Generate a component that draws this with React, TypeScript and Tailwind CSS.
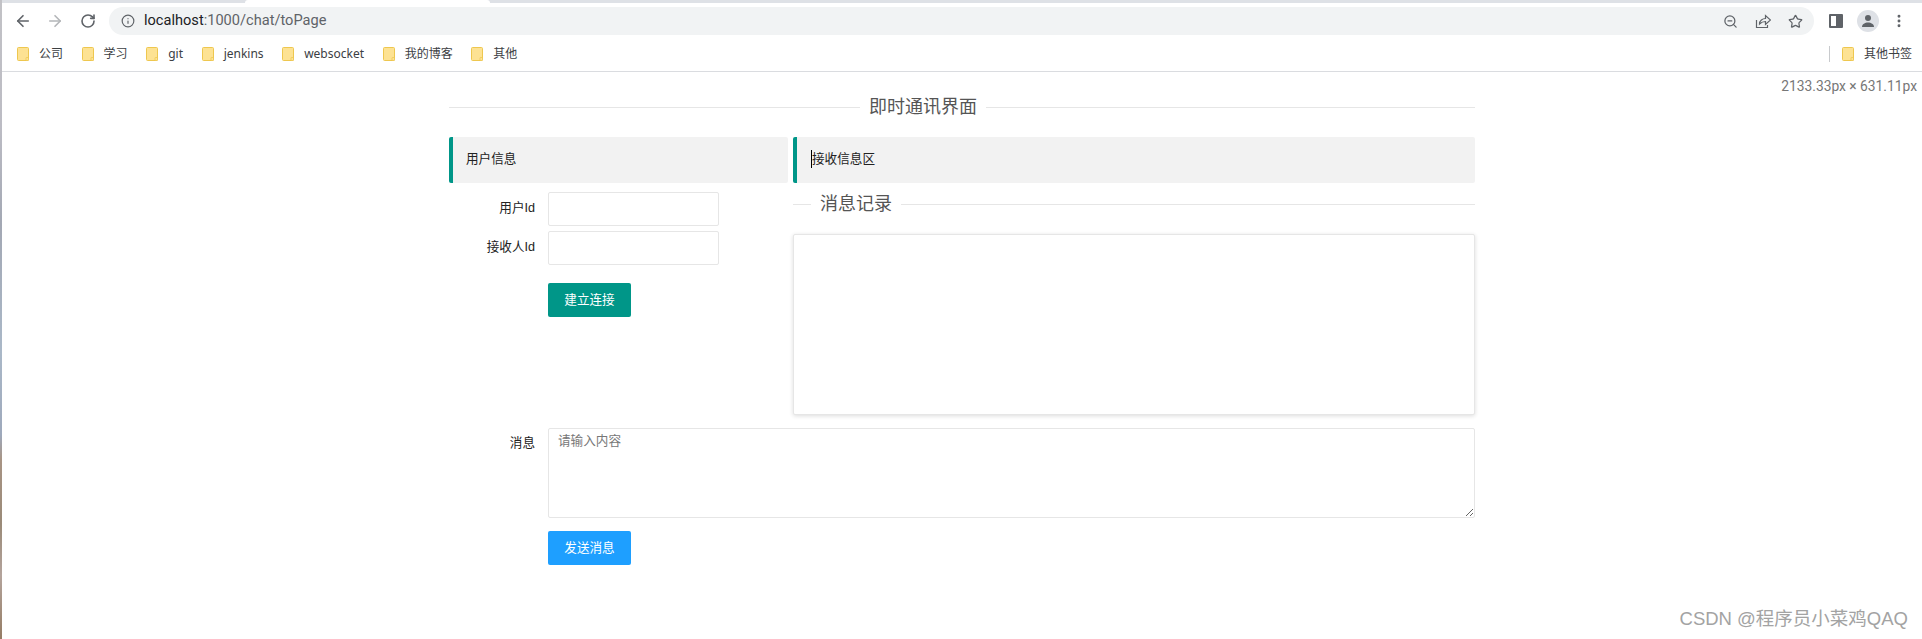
import { ArrowLeft, ArrowRight, Info, MoreVertical, RotateCw, Star, ZoomOut } from "lucide-react";

const bookmarks = ["公司", "学习", "git", "jenkins", "websocket", "我的博客", "其他"];

function FolderIcon() {
  return (
    <svg width="12" height="14" viewBox="0 0 12 14" className="shrink-0">
      <rect x="0.5" y="0.5" width="11" height="13" rx="1" fill="#fde293" stroke="#eec74f" />
      <rect x="9" y="10.5" width="2.5" height="3" rx="0.5" fill="#fde293" stroke="#eec74f" strokeWidth="0.7" />
    </svg>
  );
}

function SectionTitle({ title, lead }: { title: string; lead?: boolean }) {
  return (
    <div className="flex h-6 items-center">
      <div className={lead ? "h-px w-[18px] bg-[#e6e6e6]" : "h-px flex-1 bg-[#e6e6e6]"} />
      <span className="px-[9px] text-[18px] leading-6 text-[#555]">{title}</span>
      <div className={lead ? "h-px flex-1 bg-[#e6e6e6]" : "h-px w-[489px] bg-[#e6e6e6]"} />
    </div>
  );
}

function FormRow({ label }: { label: string }) {
  return (
    <div className="flex items-center">
      <label className="w-[86px] pb-[1px] text-right text-[12.6px] text-[#222]">{label}</label>
      <input className="ml-[13px] h-[34px] w-[171px] rounded-[2px] border border-[#e6e6e6] bg-white outline-none" />
    </div>
  );
}

export default function App() {
  return (
    <div className="flex h-[639px] w-full overflow-hidden bg-white font-['Liberation_Sans','Noto_Sans_CJK_SC',sans-serif]">
      <div className="w-[2px] shrink-0 bg-[linear-gradient(180deg,#c2c2c6_0%,#bcbcc4_20%,#a3a8b4_35%,#aab8c8_55%,#9ea9bc_68%,#a89484_72%,#9a8a78_82%,#b4a49c_90%,#947c64_100%)]" />
      <div className="relative min-w-0 flex-1">
        {/* browser chrome */}
        <div className="flex h-[3px] bg-[#dee1e6]">
          <div className="ml-[243px] h-[3px] w-[245px] rounded-t-lg bg-white" />
        </div>
        <div className="flex h-9 items-center text-[#5f6368]">
          <ArrowLeft size={18} strokeWidth={2.2} className="ml-[12px]" />
          <ArrowRight size={18} strokeWidth={2.2} className="ml-[14px] text-[#b4b6b9]" />
          <RotateCw size={16} strokeWidth={2.4} className="ml-[16px]" />
          <div className="ml-[13px] flex h-7 w-[1705px] items-center rounded-full bg-[#f1f3f4]">
            <Info size={14} strokeWidth={2} className="ml-[12px]" />
            <span className="ml-[9px] font-['Roboto'] text-[14.6px] text-[#202124]">
              localhost<span className="text-[#5f6368]">:1000/chat/toPage</span>
            </span>
            <ZoomOut size={15} strokeWidth={2} className="ml-auto" />
            <svg width="16" height="16" viewBox="0 0 16 16" fill="none" stroke="currentColor" strokeWidth="1.2" className="ml-[17px]">
              <path d="M1.500 7v7.500h11V12" />
              <path d="M4.500 11c0-3.500 3-5.500 6-5.500V2.500l5 4.500-5 4.500V8.500c-2.500 0-4.500 1-6 2.500z" />
            </svg>
            <Star size={15} strokeWidth={2} className="ml-[17px] mr-[11px]" />
          </div>
          <div className="ml-[15px] h-[14px] w-[14px] rounded-[1px] border-[2px] border-r-[7px] border-[#5f6368]" />
          <div className="ml-[14px] flex h-[22px] w-[22px] items-center justify-center overflow-hidden rounded-full bg-[#dee1e6]">
            <svg width="14" height="14" viewBox="0 0 14 14" fill="#5f6368">
              <circle cx="7" cy="4" r="3" />
              <path d="M1 13c0-3 3-4.500 6-4.500s6 1.500 6 4.500z" />
            </svg>
          </div>
          <MoreVertical size={16} strokeWidth={2.4} className="ml-[12px]" />
        </div>
        <div className="flex h-[33px] items-center border-b border-[#dadce0] pb-[2px] font-['Noto_Sans','Noto_Sans_CJK_SC',sans-serif] text-[12px] text-[#3c4043]">
          <div className="ml-[15px] flex items-center gap-[18.6px]">
            {bookmarks.map((b) => (
              <div key={b} className="flex items-center gap-[10px]">
                <FolderIcon />
                <span>{b}</span>
              </div>
            ))}
          </div>
          <div className="ml-auto mr-[10px] flex items-center">
            <div className="mr-3 h-4 w-px bg-[#c8cacd]" />
            <FolderIcon />
            <span className="ml-[10px]">其他书签</span>
          </div>
        </div>

        {/* page */}
        <div className="ml-[447px] w-[1026px] pt-[23px]">
          <SectionTitle title="即时通讯界面" />
          <div className="mt-[18px] flex gap-[5px]">
            <div className="w-[339px]">
              <div className="flex h-[46px] items-center rounded-[2px] border-l-4 border-[#009688] bg-[#f2f2f2] pb-[2px] pl-[13px] text-[12.6px] text-[#222]">
                用户信息
              </div>
              <div className="mt-[9px] flex flex-col gap-[5px]">
                <FormRow label="用户Id" />
                <FormRow label="接收人Id" />
              </div>
              <button className="ml-[99px] mt-[18px] h-[34px] w-[83px] rounded-[2px] bg-[#009688] text-[12.6px] text-white">
                建立连接
              </button>
            </div>
            <div className="flex-1">
              <div className="flex h-[46px] items-center rounded-[2px] border-l-4 border-[#009688] bg-[#f2f2f2] pb-[2px] pl-[14px] text-[12.6px] text-[#222]">
                <span className="border-l border-black">接收信息区</span>
              </div>
              <div className="mt-[9px]">
                <SectionTitle title="消息记录" lead />
              </div>
              <div className="mt-[18px] h-[181px] rounded-[2px] border border-[#e6e6e6] bg-white shadow-[0_1px_4px_rgba(0,0,0,0.14)]" />
            </div>
          </div>
          <div className="mt-[13px] flex">
            <label className="w-[86px] pt-[6px] text-right text-[12.6px] text-[#222]">消息</label>
            <textarea
              placeholder="请输入内容"
              className="ml-[13px] h-[90px] flex-1 rounded-[2px] border border-[#e6e6e6] px-[9px] py-[3px] text-[12.6px] outline-none placeholder:text-[#777]"
            />
          </div>
          <button className="ml-[99px] mt-[13px] h-[34px] w-[83px] rounded-[2px] bg-[#1e9fff] text-[12.6px] text-white">
            发送消息
          </button>
        </div>

        {/* overlays */}
        <span className="absolute right-[5px] top-[76px] font-['Roboto'] text-[13.8px] text-[#777]">2133.33px × 631.11px</span>
        <span className="absolute right-[14px] top-[607px] text-[18.5px] leading-6 text-[#a3a3a3]">CSDN @程序员小菜鸡QAQ</span>
      </div>
    </div>
  );
}
